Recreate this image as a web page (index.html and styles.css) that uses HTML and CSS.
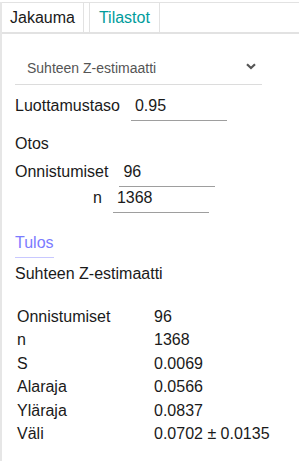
FILE: index.html
```html
<!DOCTYPE html>
<html lang="fi">
<head>
    <meta charset="UTF-8">
    <meta name="viewport" content="width=device-width, initial-scale=1.0">
    <title>Tilastot</title>
    <link rel="stylesheet" href="styles.css">
</head>
<body>
    <div class="panel">
        <div class="tabs">
            <div class="tab">Jakauma</div>
            <div class="tab active">Tilastot</div>
            <div class="tab-rest"></div>
        </div>

        <div class="content">
            <div class="select">
                <span>Suhteen Z-estimaatti</span>
                <svg class="chevron" width="10" height="7" viewBox="0 0 10 7">
                    <path d="M1 1.2 L5 5 L9 1.2" fill="none" stroke="#555" stroke-width="2.2"/>
                </svg>
            </div>

            <div class="field first">
                <label>Luottamustaso</label>
                <input class="num" type="text" value="0.95">
            </div>

            <div class="sub">Otos</div>
            <div class="field">
                <label>Onnistumiset</label>
                <input class="num" type="text" value="96">
            </div>
            <div class="field">
                <label class="short">n</label>
                <input class="num" type="text" value="1368">
            </div>

            <div class="result-title">Tulos</div>
            <div class="method">Suhteen Z-estimaatti</div>

            <table class="result">
                <tr><td>Onnistumiset</td><td>96</td></tr>
                <tr><td>n</td><td>1368</td></tr>
                <tr><td>S</td><td>0.0069</td></tr>
                <tr><td>Alaraja</td><td>0.0566</td></tr>
                <tr><td>Yläraja</td><td>0.0837</td></tr>
                <tr><td>Väli</td><td>0.0702 ± 0.0135</td></tr>
            </table>
        </div>
    </div>
</body>
</html>
```

FILE: styles.css
```css
body {
    margin: 0;
    font-family: "Liberation Sans", Arial, sans-serif;
    font-size: 16px;
    color: #1a1a1a;
}

.panel {
    border-left: 2px solid #e6e6e6;
    min-height: 461px;
    box-sizing: border-box;
}

.tabs {
    display: flex;
    margin-top: 2px;
    border-top: 1px solid #e2e2e2;
    border-bottom: 2px solid #e2e2e2;
    height: 29px;
}

.tab {
    padding: 0 8px;
    line-height: 29px;
    border-right: 1px solid #e2e2e2;
}

.tab.active {
    color: #009c9c;
    margin-left: 5px;
    border-left: 1px solid #e2e2e2;
    padding: 0 9px;
}

.tab-rest {
    flex: 1;
}

.content {
    padding: 0 0 0 13px;
}

.select {
    width: 247px;
    box-sizing: border-box;
    margin-top: 18px;
    height: 33px;
    padding: 0 12px;
    display: flex;
    align-items: center;
    justify-content: space-between;
    border-bottom: 1px solid #dcdcdc;
    font-size: 14px;
    color: #555;
}

.chevron {
    margin-right: -6px;
    margin-top: -3px;
}

.field {
    display: flex;
    align-items: baseline;
    height: 26px;
}

.field.first {
    margin-top: 10px;
    margin-bottom: 10px;
}

.field label {
    margin-right: 11px;
}

.field label.short {
    margin-left: 78px;
    margin-right: 11px;
}

.num {
    width: 96px;
    border: none;
    border-bottom: 1px solid #9e9e9e;
    padding: 2px 4px 5px;
    font-family: inherit;
    font-size: 16px;
    color: #1a1a1a;
    outline: none;
    box-sizing: border-box;
}

.sub {
    height: 26px;
    line-height: 26px;
    margin-top: 1px;
    margin-bottom: 4px;
}

.result-title {
    display: inline-block;
    margin-top: 21px;
    color: #7b7bff;
    padding-bottom: 5px;
    border-bottom: 1px solid #c8c8ff;
}

.method {
    margin-top: 7px;
}

.result {
    margin-top: 22px;
    border-spacing: 0;
    margin-left: 2px;
}

.result td {
    padding: 0;
    height: 23.5px;
    line-height: 18px;
}

.result td:first-child {
    width: 137px;
}
```
